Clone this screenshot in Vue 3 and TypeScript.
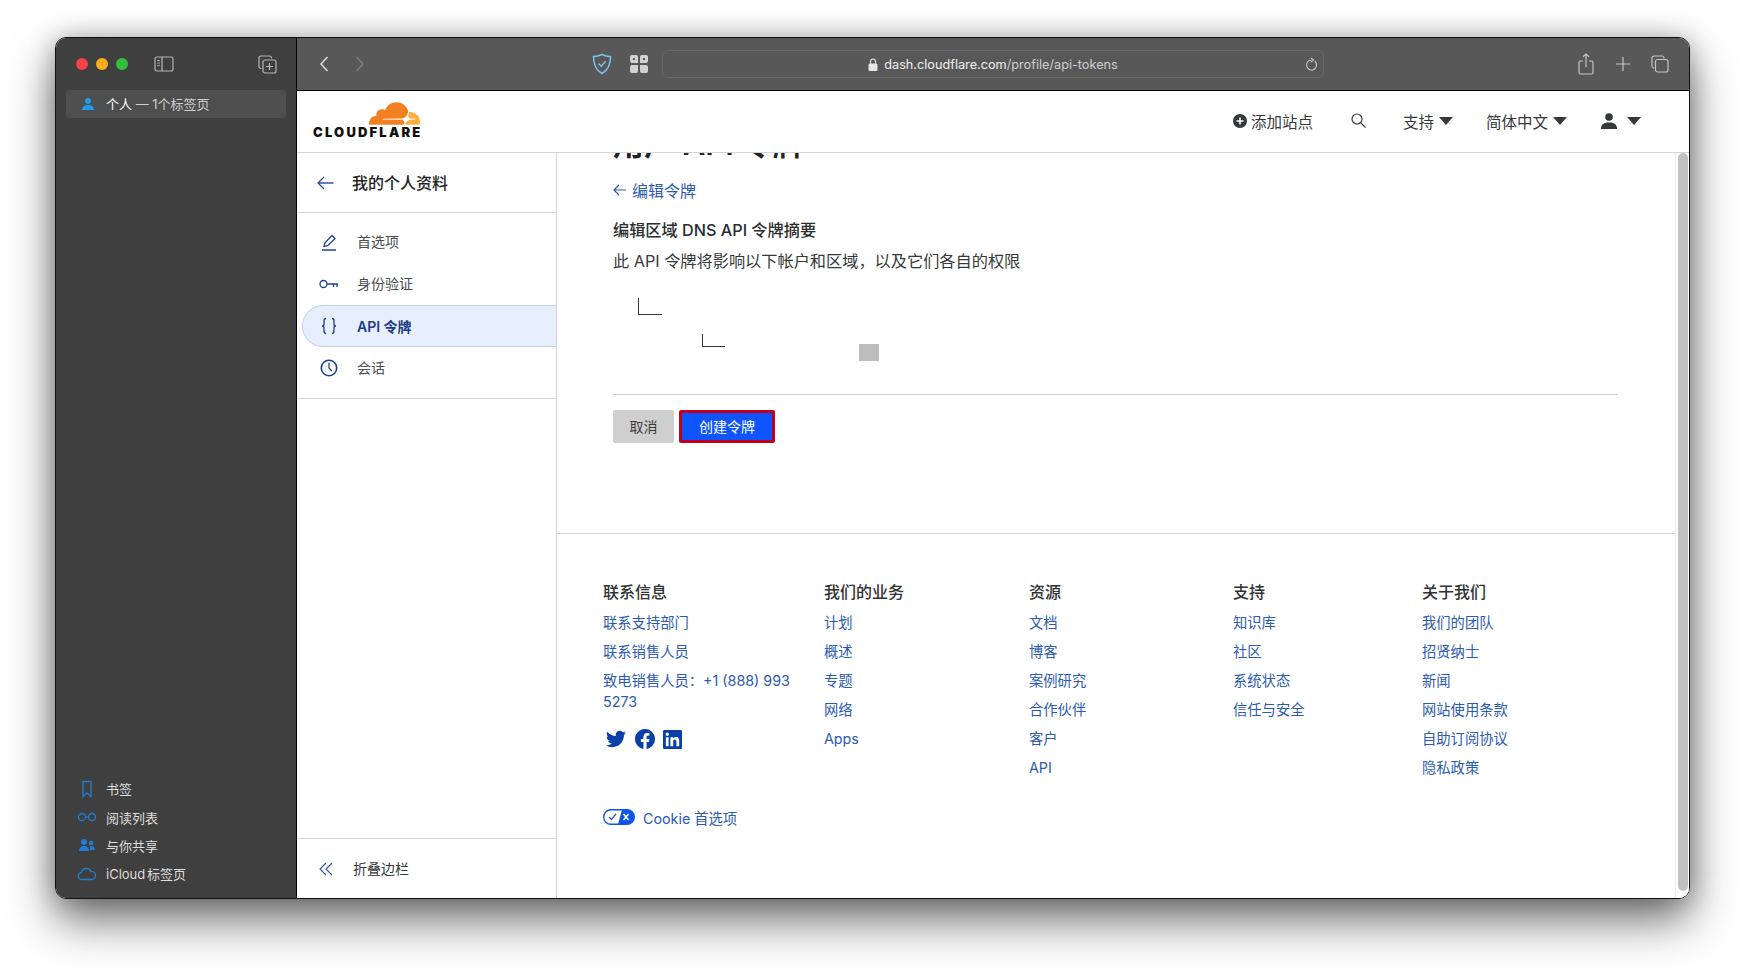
<script setup lang="ts">
const navItems = [
  { label: '首选项', icon: 'pen', active: false },
  { label: '身份验证', icon: 'key', active: false },
  { label: 'API 令牌', icon: 'braces', active: true },
  { label: '会话', icon: 'clock', active: false },
];

const footerCols = [
  { title: '联系信息', links: ['联系支持部门', '联系销售人员', '致电销售人员：+1 (888) 993 5273'], social: true },
  { title: '我们的业务', links: ['计划', '概述', '专题', '网络', 'Apps'], social: false },
  { title: '资源', links: ['文档', '博客', '案例研究', '合作伙伴', '客户', 'API'], social: false },
  { title: '支持', links: ['知识库', '社区', '系统状态', '信任与安全'], social: false },
  { title: '关于我们', links: ['我们的团队', '招贤纳士', '新闻', '网站使用条款', '自助订阅协议', '隐私政策'], social: false },
];

const sideLinks = ['书签', '阅读列表', '与你共享', 'iCloud 标签页'];
</script>

<template>
  <div class="stage">
    <div class="window">
      <aside class="side">
        <div class="side-top">
          <span class="dot red"></span>
          <span class="dot yellow"></span>
          <span class="dot green"></span>
          <svg class="side-toggle" width="20" height="16" viewBox="0 0 20 16" fill="none" stroke="#b5b5b5" stroke-width="1.2">
            <rect x="1" y="1" width="18" height="14" rx="2" />
            <path d="M8 1v14M3.2 4.5h2.6M3.2 7h2.6M3.2 9.5h2.6" />
          </svg>
          <svg class="side-new" width="19" height="19" viewBox="0 0 19 19" fill="none" stroke="#b5b5b5" stroke-width="1.2">
            <path d="M3.5 13.5H3a2 2 0 0 1-2-2V3a2 2 0 0 1 2-2h8.5a2 2 0 0 1 2 2v.5" />
            <rect x="5" y="5" width="13" height="13" rx="2" />
            <path d="M11.5 8v7M8 11.5h7" />
          </svg>
        </div>
        <div class="tab-group">
          <svg width="14" height="14" viewBox="0 0 14 14" fill="#1e9bf0">
            <circle cx="7" cy="4" r="3" />
            <path d="M1 13c0-3.5 2.5-5 6-5s6 1.5 6 5z" />
          </svg>
          <span class="tab-name"><b>个人</b> — 1个标签页</span>
        </div>
        <div class="side-spacer"></div>
        <ul class="side-links">
          <li v-for="(item, i) in sideLinks" :key="item">
            <svg width="20" height="18" viewBox="0 0 20 18" fill="none" stroke="#1f7fd4" stroke-width="1.3">
              <path v-if="i === 0" d="M6 1.5h8v15l-4-3.5-4 3.5z" />
              <template v-else-if="i === 1">
                <circle cx="5" cy="9" r="3.5" />
                <circle cx="15" cy="9" r="3.5" />
                <path d="M8.5 9h3" />
              </template>
              <g v-else-if="i === 2" fill="#1f7fd4" stroke="none">
                <circle cx="7" cy="5" r="3" />
                <circle cx="14" cy="6" r="2.3" />
                <path d="M2 14c0-3 2-5 5-5s5 2 5 5zM13 9c3 0 5 1.5 5 4h-5z" />
              </g>
              <path v-else d="M5 14.5a3.5 3.5 0 0 1-.5-7A5 5 0 0 1 14 6.5a4 4 0 0 1 1 8z" />
            </svg>
            <span>{{ item }}</span>
          </li>
        </ul>
      </aside>

      <div class="browser">
        <div class="toolbar">
          <svg class="tb-back" width="12" height="18" viewBox="0 0 12 18" fill="none" stroke="#d6d6d6" stroke-width="1.6"><path d="M9.5 2L3 9l6.5 7" /></svg>
          <svg class="tb-forward" width="12" height="18" viewBox="0 0 12 18" fill="none" stroke="#7d7d7d" stroke-width="1.6"><path d="M2.5 2L9 9l-6.5 7" /></svg>
          <svg class="tb-shield" width="20" height="22" viewBox="0 0 20 22" fill="none" stroke="#7cc4f0" stroke-width="1.5">
            <path d="M10 1.5c3 1.5 5 2 8.500 2 0 8-2 13.500-8.500 17-6.500-3.500-8.500-9-8.500-17 3.500 0 5.500-.5 8.500-2z" />
            <path d="M6.5 10.5l2.7 2.7 4.5-5" />
          </svg>
          <svg class="tb-grid" width="20" height="20" viewBox="0 0 20 20" fill="#d2d2d2">
            <path d="M1 3a2 2 0 0 1 2-2h4a2 2 0 0 1 2 2v6H3a2 2 0 0 1-2-2zM11 3a2 2 0 0 1 2-2h4a2 2 0 0 1 2 2v4a2 2 0 0 1-2 2h-6zM1 13a2 2 0 0 1 2-2h6v6a2 2 0 0 1-2 2H3a2 2 0 0 1-2-2zM11 11h6a2 2 0 0 1 2 2v4a2 2 0 0 1-2 2h-4a2 2 0 0 1-2-2z" />
            <path fill="#585858" d="M4 4h2v2H4zM14 4h2v2h-2z" />
          </svg>
          <div class="address">
            <svg class="lock" width="10" height="13" viewBox="0 0 10 13" fill="#e6e6e6">
              <rect x="0.5" y="5.5" width="9" height="7.5" rx="1.5" />
              <path d="M2.5 6V3.5a2.5 2.5 0 0 1 5 0V6" fill="none" stroke="#e6e6e6" stroke-width="1.1" />
            </svg>
            <span class="url"><b>dash.cloudflare.com</b>/profile/api-tokens</span>
            <svg class="reload" width="13" height="15" viewBox="0 0 13 15" fill="none" stroke="#c9c9c9" stroke-width="1.1">
              <path d="M9.8 4.2A5 5 0 1 1 6.5 3M6 .8L8.5 3 6 5.2" />
            </svg>
          </div>
          <svg class="tb-share" width="16" height="22" viewBox="0 0 16 22" fill="none" stroke="#c4c4c4" stroke-width="1.2">
            <path d="M5 8H2.500A1.500 1.500 0 0 0 1 9.500v10A1.500 1.500 0 0 0 2.500 21h11a1.500 1.500 0 0 0 1.500-1.500v-10A1.500 1.500 0 0 0 13.500 8H11M8 14V1M5 3.800L8 1l3 2.800" />
          </svg>
          <svg class="tb-plus" width="14" height="14" viewBox="0 0 14 14" stroke="#c4c4c4" stroke-width="1.2"><path d="M7 0v14M0 7h14" /></svg>
          <svg class="tb-tabs" width="18" height="18" viewBox="0 0 18 18" fill="none" stroke="#c4c4c4" stroke-width="1.2">
            <path d="M3.5 13H3a2 2 0 0 1-2-2V3a2 2 0 0 1 2-2h8a2 2 0 0 1 2 2v.5" />
            <rect x="4.5" y="4.5" width="12.5" height="12.5" rx="2" />
          </svg>
        </div>

        <div class="page">
          <header class="cf-head">
            <div class="logo">
              <svg class="cloud" width="51" height="23" viewBox="0 6.5 24 11" preserveAspectRatio="none">
                <path fill="#f38020" d="M16.509 16.845c.147-.507.09-.971-.155-1.316-.225-.316-.605-.499-1.062-.52l-8.659-.112a.156.156 0 0 1-.133-.071c-.028-.042-.035-.099-.021-.156.028-.084.112-.148.204-.156l8.736-.112c1.035-.049 2.16-.887 2.554-1.914l.499-1.301c.021-.056.029-.113.015-.168-.563-2.546-2.835-4.445-5.55-4.445-2.504 0-4.628 1.618-5.388 3.861-.493-.366-1.119-.562-1.794-.499-1.203.119-2.166 1.083-2.286 2.286-.028.31-.007.613.064.894C1.568 13.171 0 14.775 0 16.752c0 .175.014.352.035.527.014.083.084.148.169.148h15.981c.091 0 .176-.065.204-.156z" />
                <path fill="#faae40" d="M19.266 11.281c-.077 0-.161 0-.238.011-.057 0-.106.042-.127.098l-.338 1.174c-.148.507-.092.971.154 1.317.226.316.606.498 1.063.519l1.844.113c.055 0 .105.027.133.071.028.043.035.107.021.156-.028.084-.113.148-.204.155l-1.921.113c-1.041.048-2.158.886-2.553 1.914l-.14.358c-.029.071.021.142.098.142h6.598c.077 0 .147-.049.169-.126.112-.408.175-.837.175-1.281 0-2.602-2.125-4.727-4.734-4.727" />
              </svg>
              <span class="logo-text">CLOUDFLARE</span>
            </div>
            <nav class="head-nav">
              <span class="add-site">
                <svg width="14" height="14" viewBox="0 0 14 14"><circle cx="7" cy="7" r="7" fill="#36393a" /><path d="M7 3.5v7M3.5 7h7" stroke="#fff" stroke-width="1.6" /></svg>
                添加站点
              </span>
              <svg class="search" width="15" height="15" viewBox="0 0 15 15" fill="none" stroke="#36393a" stroke-width="1.2"><circle cx="6" cy="6" r="5" /><path d="M9.7 9.7L14.5 14.5" /></svg>
              <span class="menu support">支持<i class="caret"></i></span>
              <span class="menu lang">简体中文<i class="caret"></i></span>
              <span class="menu user">
                <svg width="16" height="16" viewBox="0 0 16 16" fill="#36393a"><circle cx="8" cy="4" r="3.8" /><path d="M0 16c0-5 3-6.5 8-6.5s8 1.5 8 6.5z" /></svg>
                <i class="caret"></i>
              </span>
            </nav>
          </header>

          <div class="page-body">
            <div class="left-nav">
              <div class="left-head">
                <svg width="17" height="14" viewBox="0 0 17 14" fill="none" stroke="#2c55a8" stroke-width="1.3"><path d="M16.5 7H1M7 1L1 7l6 6" /></svg>
                <span>我的个人资料</span>
              </div>
              <ul class="left-list">
                <li v-for="item in navItems" :key="item.label" :class="{ active: item.active }">
                  <svg width="20" height="20" viewBox="0 0 20 20" fill="none" stroke="#1d3f94" stroke-width="1.3">
                    <path v-if="item.icon === 'pen'" d="M3 18h14M5 14.5l.8-3.5L13 3.5l3 3-7.300 7.200z" />
                    <template v-else-if="item.icon === 'key'">
                      <circle cx="4.5" cy="10" r="3.5" />
                      <path d="M8 10h11M14.5 10v3M18 10v3" />
                    </template>
                    <path v-else-if="item.icon === 'braces'" d="M7 2.500C5 2.500 5 3.500 5 5v3c0 1-.5 2-2 2 1.500 0 2 1 2 2v3c0 1.500 0 2.500 2 2.500M13 2.500c2 0 2 1 2 2.500v3c0 1 .5 2 2 2-1.500 0-2 1-2 2v3c0 1.500 0 2.500-2 2.500" />
                    <template v-else>
                      <circle cx="10" cy="10" r="7.7" stroke-width="1.6" />
                      <path d="M10 4.8V10l2.8 3" />
                    </template>
                  </svg>
                  <span>{{ item.label }}</span>
                </li>
              </ul>
              <div class="left-spacer"></div>
              <div class="collapse">
                <svg width="14" height="14" viewBox="0 0 14 14" fill="none" stroke="#2c55a8" stroke-width="1.1"><path d="M7 1L1 7l6 6M13 1L7 7l6 6" /></svg>
                <span>折叠边栏</span>
              </div>
            </div>

            <main class="main">
              <div class="content">
                <h1 class="clipped-title">用户 API 令牌</h1>
                <a class="back-link">
                  <svg width="13" height="12" viewBox="0 0 13 12" fill="none" stroke="#2c5bb0" stroke-width="1.2"><path d="M13 6H1M6 1L1 6l5 5" /></svg>
                  编辑令牌
                </a>
                <h2 class="summary-title">编辑区域 DNS API 令牌摘要</h2>
                <p class="summary-text">此 API 令牌将影响以下帐户和区域，以及它们各自的权限</p>
                <div class="tree-one"></div>
                <div class="tree-row">
                  <div class="tree-two"></div>
                  <div class="gray-box"></div>
                </div>
                <hr class="rule" />
                <div class="actions">
                  <button class="btn cancel">取消</button>
                  <button class="btn create">创建令牌</button>
                </div>
              </div>

              <footer class="footer">
                <div class="foot-grid">
                  <div v-for="col in footerCols" :key="col.title" class="foot-col">
                    <h3>{{ col.title }}</h3>
                    <ul>
                      <li v-for="link in col.links" :key="link">{{ link }}</li>
                    </ul>
                    <div v-if="col.social" class="social">
                      <svg width="22" height="20" viewBox="0 0 24 24" fill="#0b3fa8"><path d="M23.953 4.57a10 10 0 01-2.825.775 4.958 4.958 0 002.163-2.723c-.951.555-2.005.959-3.127 1.184a4.92 4.92 0 00-8.384 4.482C7.69 8.095 4.067 6.13 1.64 3.162a4.822 4.822 0 00-.666 2.475c0 1.71.87 3.213 2.188 4.096a4.904 4.904 0 01-2.228-.616v.06a4.923 4.923 0 003.946 4.827 4.996 4.996 0 01-2.212.085 4.936 4.936 0 004.604 3.417 9.867 9.867 0 01-6.102 2.105c-.39 0-.779-.023-1.17-.067a13.995 13.995 0 007.557 2.209c9.053 0 13.998-7.496 13.998-13.985 0-.21 0-.42-.015-.63A9.935 9.935 0 0024 4.59z" /></svg>
                      <svg width="20" height="20" viewBox="0 0 24 24" fill="#0b3fa8"><path d="M24 12.073c0-6.627-5.373-12-12-12s-12 5.373-12 12c0 5.99 4.388 10.954 10.125 11.854v-8.385H7.078v-3.47h3.047V9.43c0-3.007 1.792-4.669 4.533-4.669 1.312 0 2.686.235 2.686.235v2.953H15.83c-1.491 0-1.956.925-1.956 1.874v2.25h3.328l-.532 3.47h-2.796v8.385C19.612 23.027 24 18.062 24 12.073z" /></svg>
                      <svg width="19" height="19" viewBox="0 0 24 24" fill="#0b3fa8"><path d="M20.447 20.452h-3.554v-5.569c0-1.328-.027-3.037-1.852-3.037-1.853 0-2.136 1.445-2.136 2.939v5.667H9.351V9h3.414v1.561h.046c.477-.9 1.637-1.85 3.37-1.85 3.601 0 4.267 2.37 4.267 5.455v6.286zM5.337 7.433c-1.144 0-2.063-.926-2.063-2.064 0-1.139.92-2.065 2.063-2.065 1.14 0 2.064.926 2.064 2.065 0 1.138-.925 2.064-2.064 2.064zm1.782 13.019H3.555V9h3.564v11.452zM22.225 0H1.771C.792 0 0 .774 0 1.729v20.542C0 23.227.792 24 1.771 24h20.451C23.2 24 24 23.227 24 22.271V1.729C24 .774 23.2 0 22.222 0h.003z" /></svg>
                    </div>
                  </div>
                </div>
                <div class="cookie">
                  <svg width="32" height="16" viewBox="0 0 32 16">
                    <rect x="0.7" y="0.7" width="30.6" height="14.6" rx="7.3" fill="#fff" stroke="#0f55e8" stroke-width="1.4" />
                    <path d="M19 0.7h5a7.3 7.3 0 0 1 0 14.6h-9z" fill="#0f55e8" />
                    <path d="M6 8l2.5 2.5L13 5" fill="none" stroke="#2c5bb0" stroke-width="1.2" />
                    <path d="M20.5 5l5 6M25.5 5l-5 6" stroke="#fff" stroke-width="1.4" />
                  </svg>
                  <span>Cookie 首选项</span>
                </div>
              </footer>
            </main>

            <div class="scrollbar"><div class="thumb"></div></div>
          </div>
        </div>
      </div>
    </div>
  </div>
</template>

<style>
html,
body {
  margin: 0;
  background: #fff;
}
</style>

<style scoped>
.stage {
  width: 1745px;
  height: 972px;
  box-sizing: border-box;
  padding: 37px 55px 73px 55px;
  background: #fff;
  overflow: hidden;
  font-family: Inter, "Noto Sans CJK SC", sans-serif;
  color: #36393a;
}

.window {
  height: 100%;
  display: flex;
  border-radius: 11px;
  border: 1px solid #111;
  box-sizing: border-box;
  box-shadow: 0 22px 46px rgba(0, 0, 0, 0.55), 0 0 26px rgba(0, 0, 0, 0.25);
}

ul {
  list-style: none;
  margin: 0;
  padding: 0;
}

/* safari sidebar */
.side {
  width: 240px;
  flex: none;
  background: #3f3f3f;
  border-right: 1px solid #000;
  border-radius: 10px 0 0 10px;
  display: flex;
  flex-direction: column;
  color: #e4e4e4;
}

.side-top {
  height: 52px;
  display: flex;
  align-items: center;
  padding: 0 0 0 20px;
  gap: 8px;
}

.dot {
  width: 12px;
  height: 12px;
  border-radius: 50%;
}

.red { background: #f3424a; }
.yellow { background: #f9ae1c; }
.green { background: #32c03a; }

.side-toggle {
  margin-left: 18px;
}

.side-new {
  margin-left: 76px;
}

.tab-group {
  margin: 0 10px;
  height: 28px;
  background: #4e4e4e;
  border-radius: 4px;
  display: flex;
  align-items: center;
  padding-left: 15px;
  gap: 11px;
  font-size: 13px;
  color: #cfcfcf;
}

.tab-name {
  margin-top: -1px;
}

.tab-name b {
  color: #fff;
  font-weight: 400;
}

.side-spacer {
  flex: 1;
}

.side-links {
  padding: 0 0 10px 21px;
}

.side-links li {
  height: 28.3px;
  display: flex;
  align-items: center;
  gap: 9px;
  font-size: 13px;
  word-spacing: -2px;
  color: #dedede;
}

/* toolbar */
.browser {
  flex: 1;
  min-width: 0;
  display: flex;
  flex-direction: column;
  border-radius: 0 10px 10px 0;
  overflow: hidden;
}

.toolbar {
  height: 52px;
  flex: none;
  background: #585858;
  border-bottom: 1px solid #000;
  display: flex;
  align-items: center;
  padding-left: 21px;
}

.tb-forward { margin-left: 24px; }
.tb-shield { margin-left: 226px; }
.tb-grid { margin-left: 17px; }

.address {
  margin-left: 13px;
  width: 662px;
  height: 28px;
  box-sizing: border-box;
  border: 1px solid #686868;
  border-radius: 6px;
  display: flex;
  align-items: center;
  justify-content: center;
  gap: 6px;
  position: relative;
  font-size: 12.7px;
  color: #cfcfcf;
}

.url b {
  color: #f2f2f2;
  font-weight: 400;
}

.reload {
  position: absolute;
  right: 5px;
  top: 6px;
}

.tb-share { margin-left: 254px; }
.tb-plus { margin-left: 22px; }
.tb-tabs { margin-left: 21px; }

/* page */
.page {
  flex: 1;
  min-height: 0;
  background: #fff;
  display: flex;
  flex-direction: column;
}

.cf-head {
  height: 62px;
  flex: none;
  box-sizing: border-box;
  border-bottom: 1px solid #d5d5d5;
  display: flex;
  align-items: center;
  justify-content: space-between;
  padding: 0 48px 0 16px;
}

.logo {
  display: flex;
  flex-direction: column;
  align-items: flex-end;
  margin-top: -3px;
}

.cloud {
  display: block;
}

.logo-text {
  font-size: 13px;
  line-height: 14px;
  font-weight: 900;
  letter-spacing: 2.2px;
  margin-right: -2px;
  color: #111;
}

.head-nav {
  display: flex;
  align-items: center;
  padding-bottom: 2px;
  font-size: 15.5px;
  color: #36393a;
}

.add-site {
  display: flex;
  align-items: center;
  gap: 4px;
}

.search { margin-left: 38px; }
.support { margin-left: 37px; }
.lang { margin-left: 33px; }
.user { margin-left: 34px; }

.menu {
  display: flex;
  align-items: center;
}

.caret {
  width: 0;
  height: 0;
  margin-left: 5px;
  border-left: 7px solid transparent;
  border-right: 7px solid transparent;
  border-top: 8px solid #36393a;
}

.user .caret {
  margin-left: 10px;
}

.page-body {
  flex: 1;
  min-height: 0;
  display: flex;
}

/* profile nav */
.left-nav {
  width: 260px;
  flex: none;
  box-sizing: border-box;
  border-right: 1px solid #d5d5d5;
  display: flex;
  flex-direction: column;
}

.left-head {
  height: 60px;
  flex: none;
  box-sizing: border-box;
  border-bottom: 1px solid #d5d5d5;
  display: flex;
  align-items: center;
  gap: 18px;
  padding-left: 20px;
  font-size: 16px;
  font-weight: 500;
  color: #222;
}

.left-head span {
  margin-top: -2px;
}

.left-list {
  padding: 8px 0 9px 5px;
  border-bottom: 1px solid #d5d5d5;
}

.left-list li {
  height: 42px;
  box-sizing: border-box;
  display: flex;
  align-items: center;
  gap: 18px;
  padding-left: 17px;
  font-size: 14px;
  color: #4a4d4f;
}

.left-list li span {
  margin-top: -2px;
}

.left-list li.active {
  background: #e6effb;
  border: 1px solid #bdd0ec;
  border-right: none;
  border-radius: 21px 0 0 21px;
  padding-left: 16px;
  font-weight: 600;
  color: #1d3b88;
}

.left-list li.active span {
  margin-top: -1px;
}

.left-spacer {
  flex: 1;
}

.collapse {
  height: 60px;
  flex: none;
  box-sizing: border-box;
  border-top: 1px solid #d5d5d5;
  display: flex;
  align-items: center;
  gap: 20px;
  padding-left: 22px;
  font-size: 14px;
}

.collapse span {
  margin-top: -2px;
}

/* content */
.main {
  flex: 1;
  min-width: 0;
  overflow: hidden;
}

.content {
  padding-left: 56px;
}

.clipped-title {
  margin: -27px 0 0;
  height: 33px;
  font-size: 31px;
  line-height: 36px;
  font-weight: 600;
  color: #222;
}

.back-link {
  margin-top: 21px;
  height: 20px;
  display: flex;
  align-items: center;
  gap: 6px;
  font-size: 16px;
  color: #2c5bb0;
}

.summary-title {
  margin: 19px 0 0;
  font-size: 16.2px;
  line-height: 22px;
  font-weight: 500;
  color: #2a2c2e;
}

.summary-text {
  margin: 9px 0 0;
  font-size: 16.2px;
  line-height: 22px;
  color: #36393a;
}

.tree-one {
  margin: 26px 0 0 25px;
  width: 24px;
  height: 17px;
  box-sizing: border-box;
  border-left: 1px solid #333;
  border-bottom: 1px solid #333;
}

.tree-row {
  margin: 19px 0 0 89px;
  height: 27px;
  display: flex;
  align-items: flex-start;
}

.tree-two {
  width: 23px;
  height: 13px;
  box-sizing: border-box;
  border-left: 1px solid #333;
  border-bottom: 1px solid #333;
}

.gray-box {
  width: 20px;
  height: 17px;
  margin: 10px 0 0 134px;
  background: #bdbdbd;
}

.rule {
  margin: 33px 0 0;
  width: 1005px;
  height: 1px;
  border: none;
  background: #cfcfcf;
}

.actions {
  margin-top: 15px;
  display: flex;
  gap: 5px;
}

.btn {
  height: 33px;
  border: none;
  border-radius: 2px;
  font-family: inherit;
  font-size: 14px;
  padding: 0 0 2px;
}

.cancel {
  width: 61px;
  background: #cfcfcf;
  color: #3c3c3c;
}

.create {
  width: 96px;
  box-sizing: border-box;
  background: #0f55ff;
  border: 3px solid #c1001f;
  color: #fff;
}

.footer {
  margin-top: 90px;
  border-top: 1px solid #d5d5d5;
  padding: 46px 0 0 46px;
}

.foot-grid {
  display: grid;
  grid-template-columns: 221px 205px 204px 189px 1fr;
}

.foot-col h3 {
  margin: 0 0 8px;
  font-size: 16px;
  line-height: 24px;
  font-weight: 500;
  color: #2f3133;
}

.foot-col li {
  margin-bottom: 8px;
  max-width: 195px;
  font-size: 14.3px;
  line-height: 21px;
  color: #2c5bb0;
}

.social {
  margin-top: 16px;
  display: flex;
  align-items: center;
  gap: 8px;
  height: 22px;
  padding-left: 2px;
}

.cookie {
  margin-top: 19px;
  height: 24px;
  display: flex;
  align-items: center;
  gap: 8px;
  font-size: 14.3px;
  color: #2c5bb0;
}

.scrollbar {
  width: 14px;
  flex: none;
  box-sizing: border-box;
  border-left: 1px solid #ececec;
  padding: 0 1px 4px 2px;
  background: #fff;
}

.thumb {
  height: 738px;
  background: #c1c1c1;
  border-radius: 5px;
}
</style>
